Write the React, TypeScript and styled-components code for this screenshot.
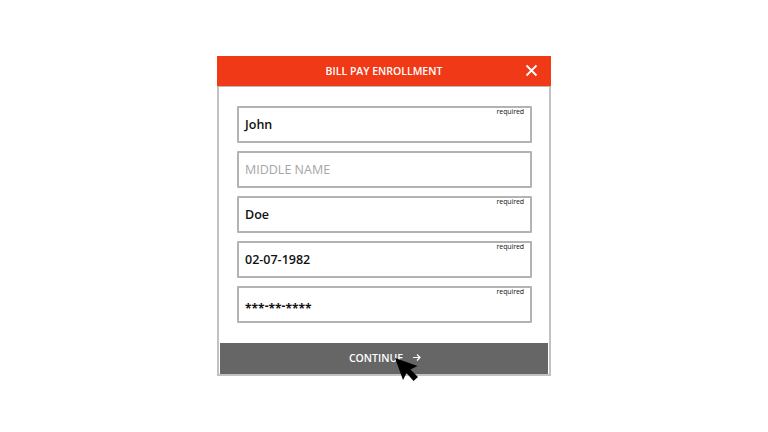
import React from 'react';
import styled, { createGlobalStyle } from 'styled-components';

const GlobalStyle = createGlobalStyle`
  html, body {
    margin: 0;
    background: #fff;
    font-family: 'Open Sans', sans-serif;
  }
`;

const Page = styled.div`
  width: 768px;
  height: 432px;
  padding-top: 56px;
  box-sizing: border-box;
  overflow: hidden;
`;

const Modal = styled.div`
  position: relative;
  width: 334px;
  height: 320px;
  margin: 0 0 0 217px;
  box-sizing: border-box;
  border: 2px solid #c2c2c2;
  border-top: 0;
  display: flex;
  flex-direction: column;
`;

const Header = styled.div`
  position: relative;
  margin: 0 -2px;
  height: 31px;
  box-sizing: border-box;
  border-bottom: 1px solid #c4b4ae;
  background: #f03a17;
  color: #fff;
  display: flex;
  align-items: center;
  justify-content: center;
  font-size: 10.5px;
  font-weight: 600;
`;

const Close = styled.svg`
  position: absolute;
  right: 13px;
  top: 8px;
  width: 13px;
  height: 13px;
`;

const Fields = styled.div`
  display: flex;
  flex-direction: column;
  gap: 8px;
  padding: 19px 17px 0 18px;
`;

const Field = styled.div`
  position: relative;
  height: 37px;
  box-sizing: border-box;
  border: 2px solid #b3b3b3;
  border-radius: 1px;
  background: #fff;
  display: flex;
  align-items: center;
  padding-left: 6px;
`;

const Value = styled.span<{ $empty?: boolean }>`
  font-size: 12.5px;
  font-weight: ${p => (p.$empty ? 500 : 600)};
  color: ${p => (p.$empty ? '#a6a6a6' : '#111')};
`;

const Masked = styled.span`
  font-size: 12px;
  font-weight: 700;
  color: #111;
  padding-top: 5px;
`;

const Star = styled.span`
  vertical-align: -3px;
`;

const Required = styled.span`
  position: absolute;
  top: -1px;
  right: 6px;
  font-size: 7px;
  font-weight: 500;
  letter-spacing: -0.1px;
  line-height: 10px;
  color: #111;
`;

const Continue = styled.div`
  margin: 20px 1px 0;
  height: 31px;
  box-sizing: border-box;
  padding: 0 0 2px 2px;
  background: #666;
  color: #fff;
  display: flex;
  align-items: center;
  justify-content: center;
  gap: 9px;
  font-size: 10.5px;
  font-weight: 600;
`;

const Arrow = styled.svg`
  width: 9px;
  height: 9px;
`;

const Pointer = styled.svg`
  position: absolute;
  left: 176px;
  top: 302px;
  width: 24px;
  height: 24px;
`;

const fields = [
  { value: 'John', required: true },
  { value: 'MIDDLE NAME', required: false },
  { value: 'Doe', required: true },
  { value: '02-07-1982', required: true },
];

export default function App() {
  return (
    <Page>
      <GlobalStyle />
      <Modal>
        <Header>
          BILL PAY ENROLLMENT
          <Close viewBox="0 0 13 13">
            <path d="M1.5 1.5 L11.5 11.5 M11.5 1.5 L1.5 11.5" stroke="#fff" strokeWidth="1.8" fill="none" />
          </Close>
        </Header>
        <Fields>
          {fields.map(f => (
            <Field key={f.value}>
              <Value $empty={!f.required}>{f.value}</Value>
              {f.required && <Required>required</Required>}
            </Field>
          ))}
          <Field>
            <Masked>
              <Star>***</Star>-<Star>**</Star>-<Star>****</Star>
            </Masked>
            <Required>required</Required>
          </Field>
        </Fields>
        <Continue>
          CONTINUE
          <Arrow viewBox="0 0 9 9">
            <path d="M1 4.5 H8 M5 1.5 L8 4.5 L5 7.5" stroke="#fff" strokeWidth="1.2" fill="none" />
          </Arrow>
        </Continue>
        <Pointer viewBox="0 0 24 24">
          <path d="M0 0 L8 22 L11.5 15 L18.5 23 L23 19 L15.5 11.5 L22.5 8 Z" fill="#000" />
        </Pointer>
      </Modal>
    </Page>
  );
}
